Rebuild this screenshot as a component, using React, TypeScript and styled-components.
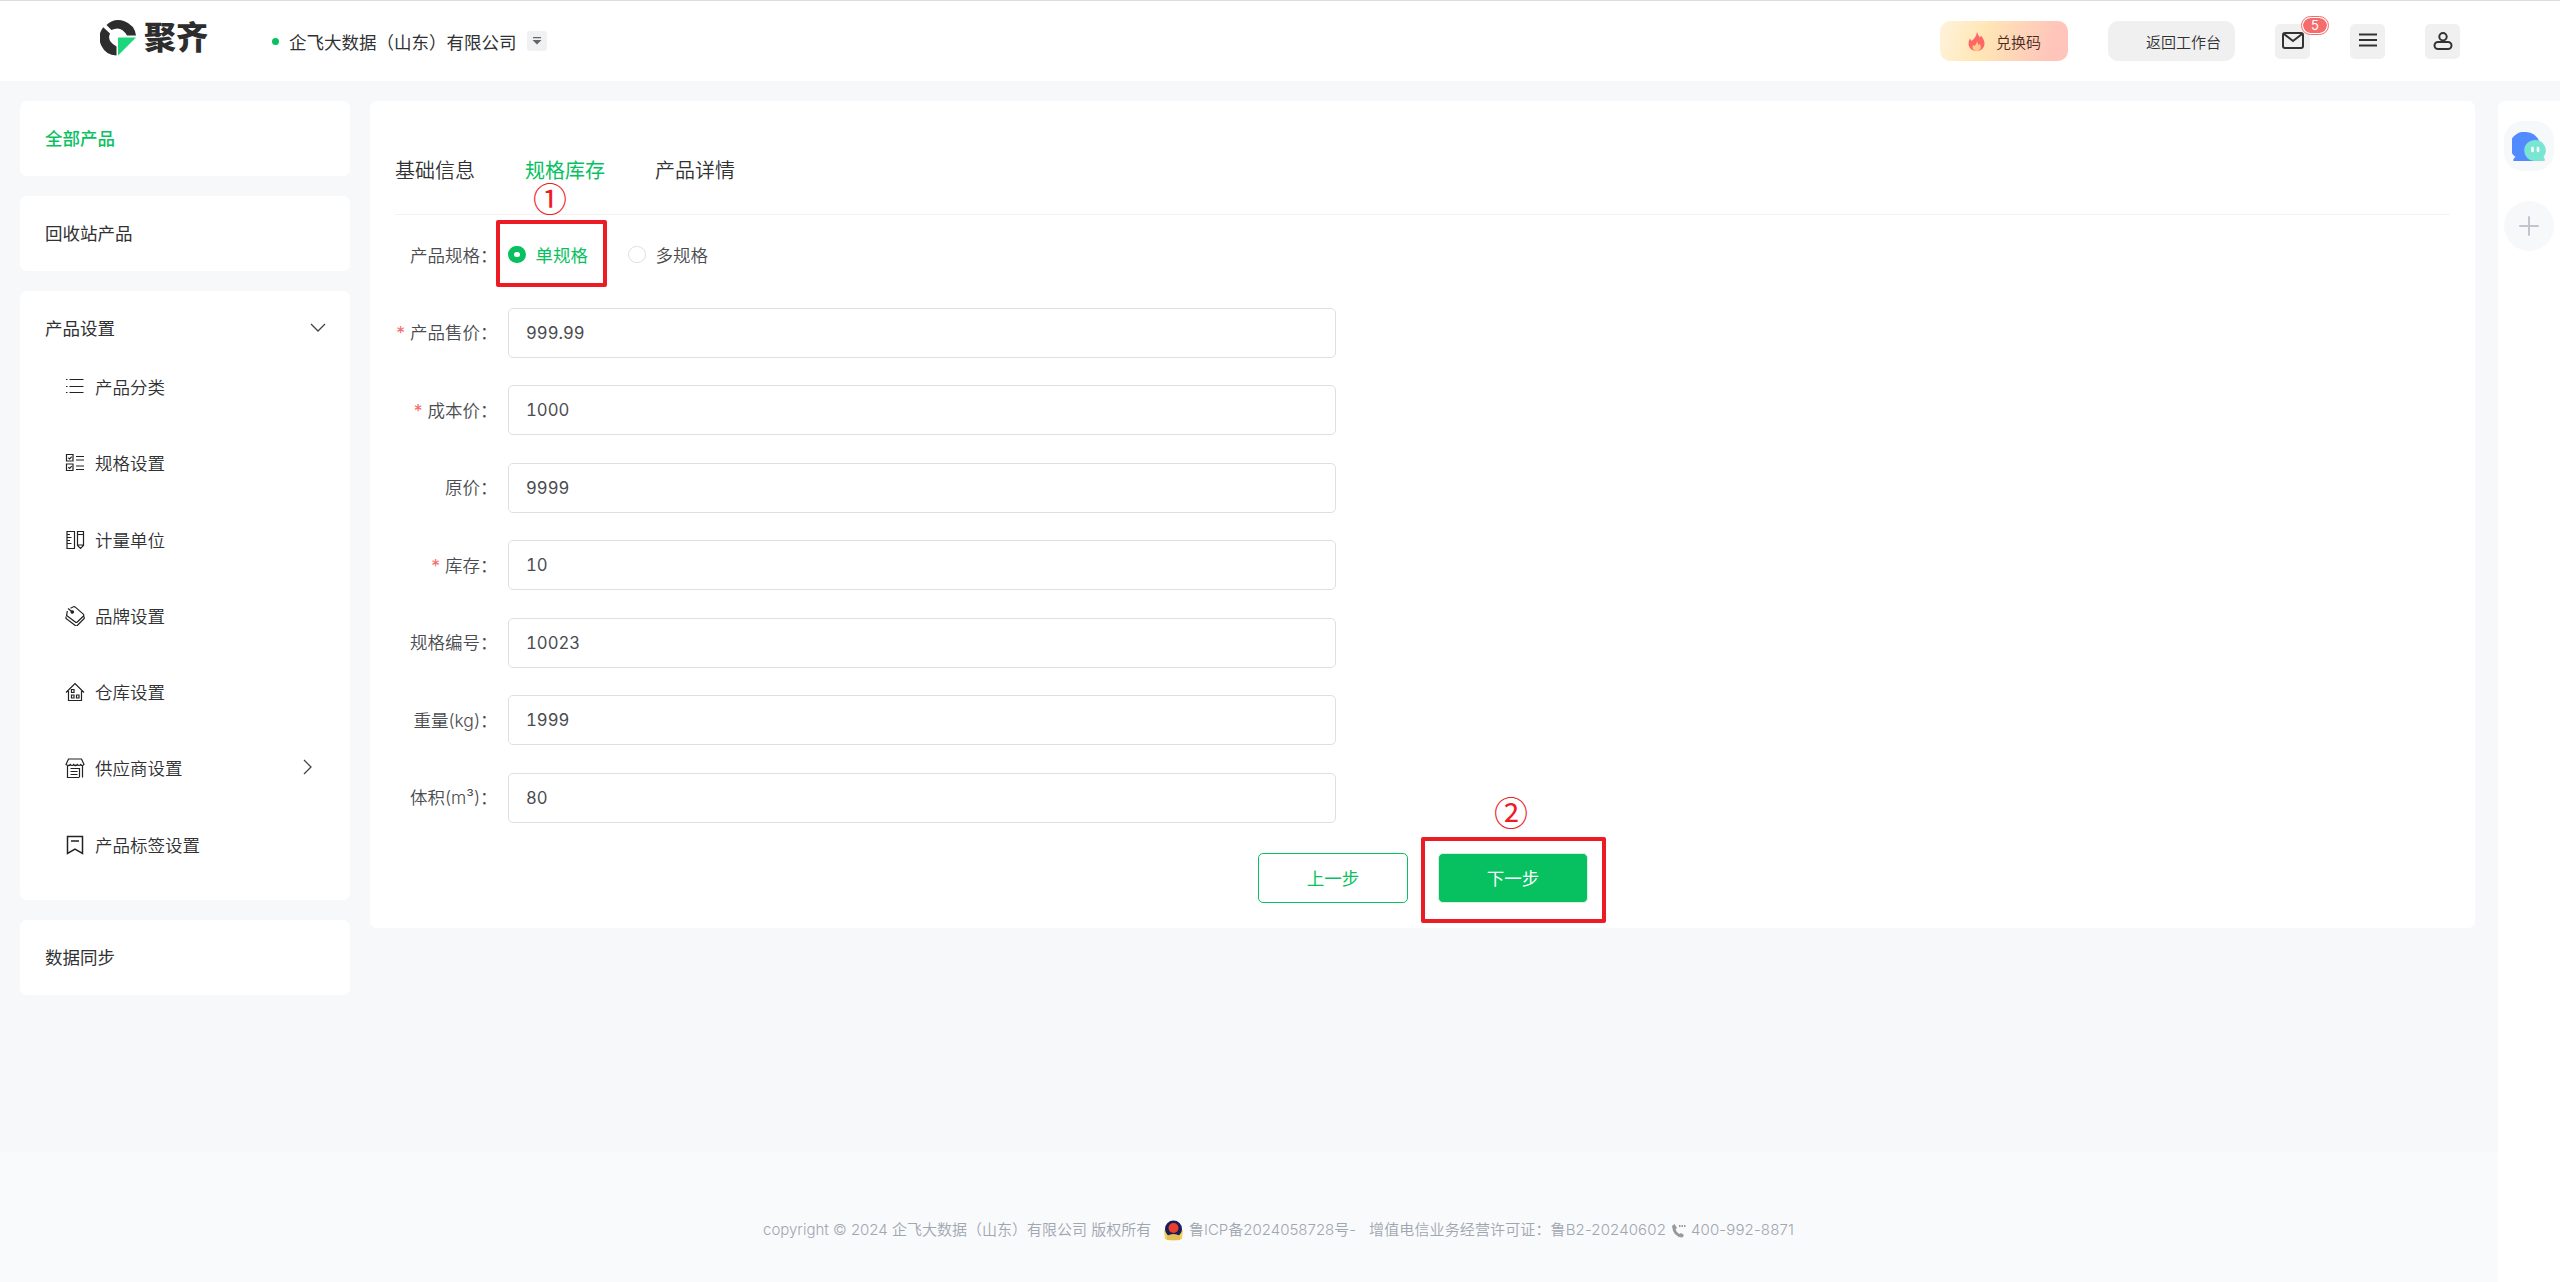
import React, { useState } from "react";
import styled, { createGlobalStyle } from "styled-components";

const color = {
  green: "#07c160",
  text: "#303133",
  regular: "#4a4c50",
  line: "#dcdfe6",
  page: "#f6f8fa",
  mark: "#ed1c24",
  danger: "#f56c6c",
};

const GlobalStyle = createGlobalStyle`
  * {
    box-sizing: border-box;
  }

  body {
    margin: 0;
    background: ${color.page};
    color: ${color.text};
    font-family: Inter, "Noto Sans CJK SC", sans-serif;
    font-size: 17.5px;
    font-weight: 350;
  }

  button,
  input {
    font: inherit;
  }
`;

const Page = styled.div`
  height: 1282px;
  display: flex;
  flex-direction: column;
  overflow: hidden;
`;

const Header = styled.header`
  height: 81px;
  flex: none;
  display: flex;
  align-items: center;
  padding: 0 100px;
  background: #fff;
  border-top: 1px solid #dcdcdc;
`;

const Logo = styled.div`
  display: flex;
  align-items: center;
  gap: 7px;
  width: 172px;
  height: 36px;
  margin-top: -7px;
  font-size: 32px;
  font-weight: 900;
  line-height: 34px;
  color: #2d2d2d;
  white-space: nowrap;
`;

const Company = styled.div`
  display: flex;
  align-items: center;
  flex: 1;
  font-weight: 400;
`;

const Dot = styled.i`
  width: 7px;
  height: 7px;
  margin-right: 10px;
  border-radius: 50%;
  background: ${color.green};
`;

const Chip = styled.span`
  width: 20px;
  height: 20px;
  margin-left: 10px;
  border-radius: 3px;
  background: #f0f1f3;
  display: flex;
  align-items: center;
  justify-content: center;
`;

const Redeem = styled.button`
  width: 128px;
  height: 40px;
  margin-right: 40px;
  padding: 0 27px 0 28px;
  border: none;
  border-radius: 10px;
  display: flex;
  align-items: center;
  justify-content: space-between;
  background: linear-gradient(105deg, #fff3dc 0%, #ffe6b5 35%, #ffc5bb 85%);
  font-size: 15px;
  color: #4b2c22;
`;

const Back = styled.button`
  width: 127px;
  height: 40px;
  margin-right: 40px;
  padding: 0 14px 0 0;
  border: none;
  border-radius: 10px;
  background: #f0f0f0;
  font-size: 15px;
  text-align: right;
  color: ${color.text};
`;

const IconButton = styled.button`
  position: relative;
  width: 35px;
  height: 35px;
  margin-right: 40px;
  padding: 0;
  border: none;
  border-radius: 5px;
  background: #f0f0f0;
  display: flex;
  align-items: center;
  justify-content: center;

  &:last-child {
    margin-right: 0;
  }
`;

const Badge = styled.span`
  position: absolute;
  left: 26px;
  top: -8px;
  width: 28px;
  height: 19px;
  padding: 1px;
  border: 1px solid ${color.danger};
  border-radius: 10px;
  background: ${color.danger} content-box;
  box-shadow: inset 0 0 0 1px #fff;
  color: #fff;
  font-size: 13px;
  font-weight: 400;
  line-height: 15px;
  text-align: center;
`;

const Body = styled.div`
  flex: 1;
  display: flex;
  min-height: 0;
`;

const Center = styled.div`
  flex: 1;
  display: flex;
  flex-direction: column;
`;

const Columns = styled.div`
  flex: 1;
  display: flex;
  align-items: flex-start;
  gap: 20px;
  padding: 20px 23px 0 20px;
`;

const Sidebar = styled.nav`
  width: 330px;
  display: flex;
  flex-direction: column;
  gap: 20px;
`;

const Card = styled.section`
  border-radius: 7px;
  background: #fff;
`;

const CardTitle = styled.div<{ $active?: boolean }>`
  height: 75px;
  padding: 0 24px 2px 25px;
  display: flex;
  align-items: center;
  justify-content: space-between;
  font-weight: ${(p) => (p.$active ? 500 : 400)};
  color: ${(p) => (p.$active ? color.green : color.text)};
`;

const SubMenu = styled.ul`
  height: 534px;
  margin: 0;
  padding: 0 35px 0 45px;
  list-style: none;
`;

const SubItem = styled.li`
  height: 76.25px;
  display: flex;
  align-items: flex-start;
  line-height: 43px;

  svg {
    margin-top: 11px;
  }
`;

const SubLabel = styled.span`
  flex: 1;
  margin-left: 10px;
`;

const Panel = styled.main`
  flex: 1;
  height: 827px;
  padding: 40px 25px 0;
  border-radius: 7px;
  background: #fff;
`;

const Tabs = styled.div`
  height: 74px;
  margin-bottom: 15px;
  display: flex;
  gap: 50px;
  border-bottom: 1px solid #f2f3f5;
  font-size: 20px;
  line-height: 60px;
`;

const Tab = styled.span<{ $active?: boolean }>`
  color: ${(p) => (p.$active ? color.green : color.text)};
  font-weight: ${(p) => (p.$active ? 400 : 350)};
`;

const FormRow = styled.div`
  height: 50px;
  margin-bottom: 27.5px;
  display: flex;
  align-items: center;
`;

const Label = styled.label<{ $required?: boolean }>`
  width: 113px;
  padding: 0 10.5px 2px 0;
  text-align: right;
  white-space: nowrap;
  color: ${color.regular};

  &::before {
    content: "${(p) => (p.$required ? "*" : "")}";
    margin-right: 5px;
    color: ${color.danger};
    font-weight: 400;
  }
`;

const Input = styled.input`
  width: 828px;
  height: 50px;
  padding: 0 17px;
  border: 1px solid ${color.line};
  border-radius: 5px;
  outline: none;
  color: ${color.regular};
  font-size: 16.7px;
  font-weight: 400;
  font-variant-numeric: tabular-nums;
`;

const RadioGroup = styled.div`
  display: flex;
`;

const Radio = styled.span<{ $active?: boolean }>`
  position: relative;
  display: flex;
  align-items: center;
  margin-right: 40px;
  padding-bottom: 1px;
  color: ${(p) => (p.$active ? color.green : color.regular)};
  font-weight: ${(p) => (p.$active ? 400 : 350)};
`;

const RadioDot = styled.i<{ $active?: boolean }>`
  width: 17.5px;
  height: 17.5px;
  margin-right: 10px;
  border-radius: 50%;
  border: ${(p) => (p.$active ? `6px solid ${color.green}` : `1px solid ${color.line}`)};
  background: #fff;
`;

const Actions = styled.div`
  display: flex;
  gap: 30px;
  padding: 3px 0 0 863px;
`;

const StepButton = styled.button<{ $primary?: boolean }>`
  position: relative;
  width: 150px;
  height: 50px;
  padding: 0 0 2px;
  border: 1px solid ${(p) => (p.$primary ? "#d9eee2" : color.green)};
  border-radius: 5px;
  background: ${(p) => (p.$primary ? color.green : "#fff")};
  color: ${(p) => (p.$primary ? "#fff" : color.green)};
  font-weight: 400;
`;

const MarkBox = styled.span<{ $w: number; $h: number; $x: number; $y: number }>`
  position: absolute;
  left: ${(p) => p.$x}px;
  top: ${(p) => p.$y}px;
  width: ${(p) => p.$w}px;
  height: ${(p) => p.$h}px;
  border: 4px solid ${color.mark};
  border-radius: 2px;
`;

const MarkNumber = styled.span<{ $x: number; $y: number }>`
  position: absolute;
  left: ${(p) => p.$x}px;
  top: ${(p) => p.$y}px;
  width: 40px;
  text-align: center;
  font: 400 34px/40px "Noto Sans CJK SC", sans-serif;
  color: ${color.mark};
`;

const Footer = styled.footer`
  height: 130px;
  padding-top: 28px;
  padding-left: 60px;
  display: flex;
  justify-content: center;
  background: #f9fafc;
  font-size: 15px;
  line-height: 100px;
  color: #a0a6b0;
  white-space: nowrap;
`;

const FooterItem = styled.span<{ $w: number; $spacing?: number }>`
  display: flex;
  align-items: center;
  gap: 5px;
  height: 100px;
  width: ${(p) => p.$w}px;
  letter-spacing: ${(p) => p.$spacing ?? 0}px;
`;

const Rail = styled.aside`
  width: 62px;
  margin-top: 20px;
  padding: 20px 6px;
  display: flex;
  flex-direction: column;
  gap: 30px;
  border-radius: 7px 0 0 0;
  background: #fff;
`;

const RailButton = styled.div<{ $radius: number }>`
  width: 50px;
  height: 50px;
  border-radius: ${(p) => p.$radius}px;
  background: #f7f8fa;
  display: flex;
  align-items: center;
  justify-content: center;
`;

const MenuIcon: React.FC<{ children: React.ReactNode }> = ({ children }) => (
  <svg width="20" height="20" viewBox="0 0 20 20" fill="none" stroke="#222" strokeWidth="1.2">
    {children}
  </svg>
);

const menu = [
  {
    name: "产品分类",
    icon: <path d="M1 2.500h1.500M4.500 2.500h14M1 9.500h1.500M4.500 9.500h14M1 15.500h1.500M4.500 15.500h14" />,
  },
  {
    name: "规格设置",
    icon: (
      <path d="M1.500 1.500h6.500v6.500h-6.500zM1.500 11h6.500v6.500h-6.500zM11 3.500h8M11 7h8M11 13h8M11 16.500h8M3.300 4.700l1.400 1.300 2-2.300M3.300 14.200l1.400 1.300 2-2.300" />
    ),
  },
  {
    name: "计量单位",
    icon: (
      <path d="M2 1.500h7.500v17H2zM2 4.500h3M2 7.500h4.500M2 10.500h3M2 13.500h4.500M12.500 1.500h6v14l-3 3-3-3zM12.500 4.500h6M12.500 15h6" />
    ),
  },
  {
    name: "品牌设置",
    icon: (
      <>
        <path d="M3 2.500l5 4M5.500 2.200l3-1.400q1-.4 1.800.3l8 7q1 .9.2 1.900l-6.200 6q-1 .9-2 0L1.600 9.600 2.300 5M1 10.500v2l9.300 7q1 .8 2 0l6.900-7v-2" />
        <circle cx="7.300" cy="6" r="1.200" fill="#222" />
      </>
    ),
  },
  {
    name: "仓库设置",
    icon: (
      <path d="M1 10.500l9-9 9 9M3.500 9v9.500h13V9M6.500 7.500h2.500v3h-2.500zM6.500 13h2.500v3h-2.500zM11.500 13h2.500v3h-2.500z" />
    ),
  },
  {
    name: "供应商设置",
    icon: (
      <path d="M3.500 1h13l2.500 5.500q-1.500 2-3.500 0-1.500 2-3 0-2 2-4 0-1.500 2-3 0-2 2-4.500 0zM2.500 8v11.500h12M17.500 8v11.500M5.500 10.500h9M5.500 13.500h7M5.500 16.500h7M14.500 10v9" />
    ),
    arrow: true,
  },
  {
    name: "产品标签设置",
    icon: <path d="M2.500 1.500h15v17l-7.500-4.500-7.500 4.500zM6 6h8" strokeWidth="1.500" />,
  },
];

const fields = [
  { name: "产品售价：", value: "999.99", required: true },
  { name: "成本价：", value: "1000", required: true },
  { name: "原价：", value: "9999" },
  { name: "库存：", value: "10", required: true },
  { name: "规格编号：", value: "10023" },
  { name: "重量(kg)：", value: "1999" },
  { name: "体积(m³)：", value: "80" },
];

const tabs = ["基础信息", "规格库存", "产品详情"];

const TopBar: React.FC = () => (
  <Header>
    <Logo>
      <svg width="37" height="36" viewBox="0 0 37 36">
        <path d="M3.200 7.200L10 13.500Q6.500 21 16.500 26.500V35.500A17.600 17.600 0 0 1 3.200 7.200z" fill="#2d2d2d" />
        <path d="M6.500 5A17.600 17.600 0 0 1 36 15.500H27Q21 5 11.500 10z" fill="#2d2d2d" />
        <path d="M18 17.500H36L18 35.500z" fill="#1cd67c" />
      </svg>
      聚齐
    </Logo>
    <Company>
      <Dot />
      企飞大数据（山东）有限公司
      <Chip>
        <svg width="10" height="10" viewBox="0 0 10 10" fill="#666">
          <path d="M1 1h8v1.300H1zM0.500 4h9L5 8.500z" />
        </svg>
      </Chip>
    </Company>
    <Redeem>
      <svg width="17" height="19" viewBox="0 0 17 19">
        <path
          d="M9 0q1 3 3 5.500l1-2q4 5 3.500 9-1 6-8 6.500-7-.5-8-6.500Q.2 9 2 6.500l1.500 2.500Q8 6 9 0z"
          fill="#ff6767"
        />
        <path d="M9 9.500q1 2 1.500 3.500l1.500-1q2.500 6-3.500 7-5.500-1-3.500-6l1.500 1Q8.500 12 9 9.500z" fill="#ffc98a" />
      </svg>
      兑换码
    </Redeem>
    <Back>返回工作台</Back>
    <IconButton>
      <svg width="22" height="18" viewBox="0 0 22 18" fill="none" stroke="#333" strokeWidth="2">
        <rect x="1" y="1" width="20" height="15" rx="2" />
        <path d="M2 2l9 7 9-7" />
      </svg>
      <Badge>5</Badge>
    </IconButton>
    <IconButton>
      <svg width="18" height="16" viewBox="0 0 18 16" stroke="#333" strokeWidth="2">
        <path d="M0 1.500h18M0 7h18M0 12.500h18" />
      </svg>
    </IconButton>
    <IconButton>
      <svg width="20" height="19" viewBox="0 0 20 19" fill="none" stroke="#333" strokeWidth="2">
        <circle cx="10" cy="4.700" r="3.700" />
        <rect x="1.500" y="10" width="17" height="7" rx="3.500" />
      </svg>
    </IconButton>
  </Header>
);

const SideNav: React.FC = () => (
  <Sidebar>
    <Card>
      <CardTitle $active>全部产品</CardTitle>
    </Card>
    <Card>
      <CardTitle>回收站产品</CardTitle>
    </Card>
    <Card>
      <CardTitle>
        产品设置
        <svg width="16" height="9" viewBox="0 0 16 9" fill="none" stroke="#444" strokeWidth="1.300">
          <path d="M1 1l7 7 7-7" />
        </svg>
      </CardTitle>
      <SubMenu>
        {menu.map((item) => (
          <SubItem key={item.name}>
            <MenuIcon>{item.icon}</MenuIcon>
            <SubLabel>{item.name}</SubLabel>
            {item.arrow && (
              <svg width="12" height="18" viewBox="0 0 12 18" fill="none" stroke="#444" strokeWidth="1.300">
                <path d="M1 2l7 7-7 7" />
              </svg>
            )}
          </SubItem>
        ))}
      </SubMenu>
    </Card>
    <Card>
      <CardTitle>数据同步</CardTitle>
    </Card>
  </Sidebar>
);

const SpecForm: React.FC = () => {
  const [values, setValues] = useState(fields.map((f) => f.value));

  const onChange = (index: number, value: string) =>
    setValues(values.map((v, i) => (i === index ? value : v)));

  return (
    <Panel>
      <Tabs>
        {tabs.map((tab) => (
          <Tab key={tab} $active={tab === "规格库存"}>
            {tab}
          </Tab>
        ))}
      </Tabs>
      <FormRow>
        <Label>产品规格：</Label>
        <RadioGroup>
          <Radio $active>
            <RadioDot $active />
            单规格
            <MarkBox $x={-12} $y={-22} $w={111} $h={67} />
            <MarkNumber $x={22} $y={-64}>
              ①
            </MarkNumber>
          </Radio>
          <Radio>
            <RadioDot />
            多规格
          </Radio>
        </RadioGroup>
      </FormRow>
      {fields.map((field, index) => (
        <FormRow key={field.name}>
          <Label $required={field.required}>{field.name}</Label>
          <Input value={values[index]} onChange={(e) => onChange(index, e.target.value)} />
        </FormRow>
      ))}
      <Actions>
        <StepButton>上一步</StepButton>
        <StepButton $primary>
          下一步
          <MarkBox $x={-18} $y={-17} $w={185} $h={86} />
          <MarkNumber $x={52} $y={-62}>
            ②
          </MarkNumber>
        </StepButton>
      </Actions>
    </Panel>
  );
};

const SiteFooter: React.FC = () => (
  <Footer>
    <FooterItem $w={400}>copyright © 2024 企飞大数据（山东）有限公司 版权所有</FooterItem>
    <FooterItem $w={206}>
      <svg width="21" height="21" viewBox="0 0 21 21">
        <path d="M1 10h19l-1 9q-8 3-17 0z" fill="#f0d060" />
        <circle cx="10.500" cy="9" r="8.500" fill="#1c1c5a" />
        <circle cx="10.500" cy="8" r="5" fill="#e8402a" />
        <path d="M4 16q6.500-4 13 0v4H4z" fill="#e5bd55" />
      </svg>
      鲁ICP备2024058728号-
    </FooterItem>
    <FooterItem $w={426} $spacing={0.13}>
      增值电信业务经营许可证：鲁B2-20240602
      <svg width="15" height="15" viewBox="0 0 15 15" fill="#999">
        <path d="M1 3l2.500-2 2.500 4-1.500 1.500q1 3 4 4.500l1.500-1 3 2-1.500 2.500Q2 14 1 3zM8 2h1.500v2H8zM10.500 2H12v2h-1.500zM13 2h1.500v2H13z" />
      </svg>
      400-992-8871
    </FooterItem>
  </Footer>
);

const App: React.FC = () => (
  <Page>
    <GlobalStyle />
    <TopBar />
    <Body>
      <Center>
        <Columns>
          <SideNav />
          <SpecForm />
        </Columns>
        <SiteFooter />
      </Center>
      <Rail>
        <RailButton $radius={19}>
          <svg width="34" height="29" viewBox="0 0 34 29">
            <path d="M14 0a14 14 0 0 1 8 25.500V29H1.500q-1-2 2-4A14 14 0 0 1 14 0z" fill="#528bff" />
            <path
              d="M23.500 8a10.500 10.500 0 0 1 8 17q2 2 1 4H22A10.500 10.500 0 0 1 23.500 8z"
              fill="#79e6d4"
            />
            <path d="M20.500 16v3M26 16v3" stroke="#fff" strokeWidth="2.600" strokeLinecap="round" />
          </svg>
        </RailButton>
        <RailButton $radius={25}>
          <svg width="20" height="20" viewBox="0 0 20 20" stroke="#c3c4d0" strokeWidth="2" strokeLinecap="round">
            <path d="M1 10h18M10 1v18" />
          </svg>
        </RailButton>
      </Rail>
    </Body>
  </Page>
);

export default App;
